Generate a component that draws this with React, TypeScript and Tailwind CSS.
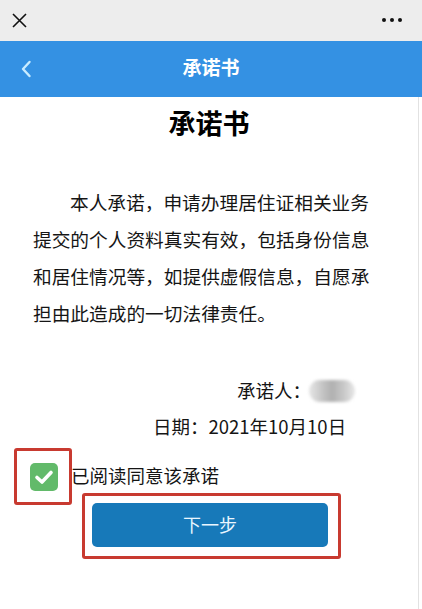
import React from "react";

const font = { fontFamily: '"Noto Sans CJK SC", "Noto Sans", sans-serif' };

export default function App() {
  return (
    <div className="w-[422px] h-[609px] bg-white overflow-hidden flex flex-col" style={font}>
      {/* top system bar */}
      <div className="h-[41px] bg-[#ededed] flex items-center justify-between pl-[12px] pr-[20px] shrink-0">
        <svg width="15" height="15" viewBox="0 0 15 15" className="mt-[-1px]">
          <path d="M1 1 L14 14 M14 1 L1 14" stroke="#111" strokeWidth="1.6" fill="none" />
        </svg>
        <div className="flex gap-[4px] items-center mb-[2px]">
          <span className="w-[4px] h-[4px] rounded-full bg-[#111]" />
          <span className="w-[4px] h-[4px] rounded-full bg-[#111]" />
          <span className="w-[4px] h-[4px] rounded-full bg-[#111]" />
        </div>
      </div>
      {/* blue header */}
      <div className="h-[56px] bg-[#3491e3] flex items-center relative shrink-0">
        <svg width="12" height="18" viewBox="0 0 12 18" className="ml-[20px]">
          <path d="M9.5 2 L3 9 L9.5 16" stroke="#c9ecff" strokeWidth="2.4" fill="none" strokeLinecap="round" strokeLinejoin="round" />
        </svg>
        <div className="absolute inset-0 flex items-center justify-center text-white text-[19px] font-bold pb-[3px]">
          承诺书
        </div>
      </div>
      {/* content */}
      <div className="flex-1 w-[419px] border-r border-[#e2e2e2] flex flex-col">
        <div className="pt-[6px] h-[46px] flex items-center justify-center text-[27px] leading-[40px] font-bold text-black">
          承诺书
        </div>
        <p className="mt-[40px] ml-[33px] w-[340px] text-[18.7px] leading-[37px] text-[#151515] indent-[37px]">
          本人承诺，申请办理居住证相关业务提交的个人资料真实有效，包括身份信息和居住情况等，如提供虚假信息，自愿承担由此造成的一切法律责任。
        </p>
        <div className="mt-[42px] h-[36px] flex items-center text-[18.5px] text-[#151515]">
          <span className="ml-[237px]">承诺人：</span>
          <div className="ml-[-2px] w-[46px] h-[22px] rounded-[11px] bg-[linear-gradient(90deg,#e6e6e6_0%,#c4c4c4_30%,#b0b0b0_50%,#c8c8c8_75%,#e8e8e8_100%)] blur-[1.5px]" />
        </div>
        <div className="h-[36px] flex items-center text-[18.5px] text-[#151515]">
          <span className="ml-[153px]">日期：2021年10月10日</span>
        </div>
        <div className="mt-[3px] flex items-center">
          <div className="ml-[14px] w-[58px] h-[57px] border-[3px] border-[#c83a30] rounded-[3px] flex items-center justify-center">
            <div className="w-[28px] h-[28px] rounded-[5px] bg-[#62ba6a] flex items-center justify-center ml-[2px]">
              <svg width="20" height="16" viewBox="0 0 20 16">
                <path d="M3 8.5 L8 13 L17 3.5" stroke="#fff" strokeWidth="3.6" fill="none" strokeLinecap="round" strokeLinejoin="round" />
              </svg>
            </div>
          </div>
          <span className="text-[18.5px] text-[#151515] ml-[-1px] mt-[-1px]">已阅读同意该承诺</span>
        </div>
        <div className="ml-[82px] mt-[-12px] w-[259px] h-[66px] border-[3px] border-[#c83a30] rounded-[3px] pl-[7px] pt-[7px]">
          <div className="w-[236px] h-[44px] rounded-[5px] bg-[#1779b9] flex items-center justify-center text-[#eaf6ff] text-[18px] pb-[1px]">
            下一步
          </div>
        </div>
      </div>
    </div>
  );
}
